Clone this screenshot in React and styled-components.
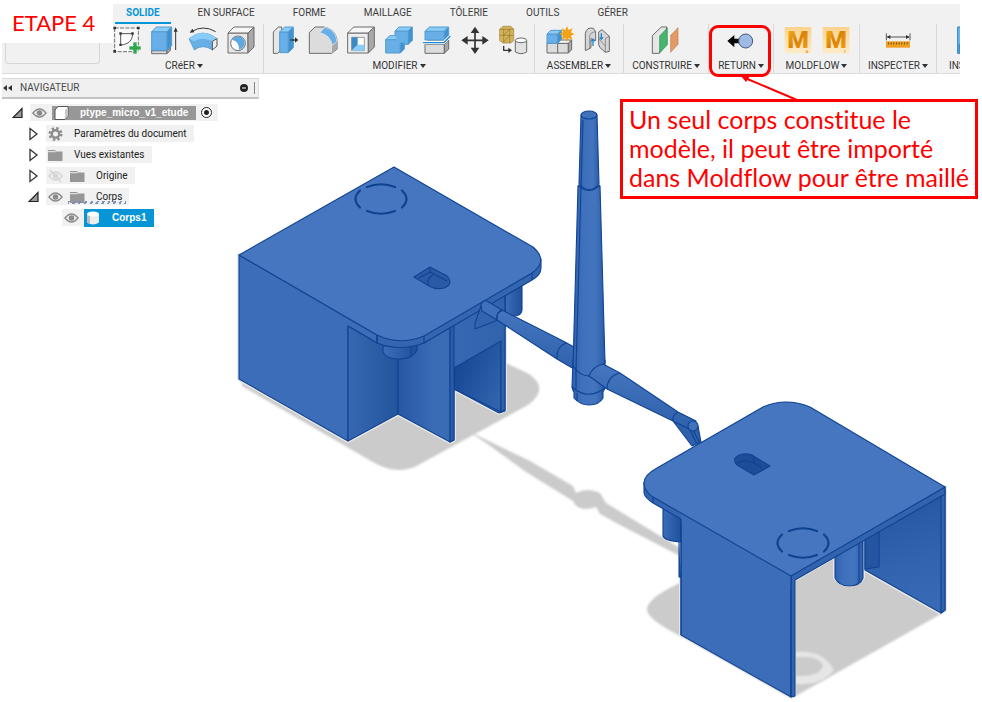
import React from "react";
import styled, { createGlobalStyle, css } from "styled-components";

const uiFont = css`Roboto, "Liberation Sans", sans-serif`;
const noteFont = css`Lato, "Open Sans", sans-serif`;

const GlobalStyle = createGlobalStyle`
  *, *::before, *::after { box-sizing: border-box; }
  body { margin: 0; background: #fff; color: #3c3c3c; font-family: "Liberation Sans", sans-serif; }
  button { border: 0; padding: 0; background: none; color: inherit; font: inherit; }
  svg { display: block; }
`;

const Page = styled.main`
  min-height: 100vh;
  background: #fff;
  overflow-x: hidden;
`;

/* ---------- Header ---------- */
const Header = styled.header`
  display: grid;
  grid-template-columns: 113px minmax(0, 1fr);
  padding-right: 22px;
`;
const StepColumn = styled.div`
  display: flex;
  flex-direction: column;
`;
const StepTitle = styled.h1`
  margin: 0;
  padding: 7px 0 4px 12px;
  color: #f00;
  font: 400 22px/32px ${noteFont};
  white-space: nowrap;
`;
const StepFooter = styled.div`
  flex: 1;
  margin-left: 2px;
  padding: 0 13px 9px 3px;
  background: #f1f1f1;
  border-bottom: 1px solid #dcdcdc;
`;
const WorkspaceButton = styled.button`
  display: block;
  width: 100%;
  height: 100%;
  border: 1px solid #d6d6d6;
  border-top: 0;
  border-radius: 0 0 4px 4px;
`;
const Ribbon = styled.div`
  margin-top: 4px;
  background: #f1f1f1;
  border-bottom: 1px solid #dcdcdc;
`;
const Tabs = styled.nav`
  display: flex;
  gap: 16px;
  padding-left: 2px;
`;
const Tab = styled.button`
  height: 20px;
  padding: 0 11px;
  border-bottom: 2px solid ${(p) => (p.$active ? "#0696d7" : "transparent")};
  color: ${(p) => (p.$active ? "#0696d7" : "#3c3c3c")};
  font: ${(p) => (p.$active ? 700 : 400)} 10px/18px ${uiFont};
  white-space: nowrap;
`;
const Groups = styled.div`
  display: flex;
`;
const Group = styled.section`
  position: relative;
  flex: 0 0 ${(p) => p.$width}px;
  display: flex;
  flex-direction: column;
  align-items: center;
  gap: 4px;
  padding: 2px 0 1px;
  &:first-child {
    padding-right: 8px;
  }
  &:not(:last-child) {
    border-right: 1px solid #d9d9d9;
  }
  &:last-child {
    flex: 1 1 0;
    overflow: hidden;
    align-items: flex-start;
    padding-left: 12px;
  }
`;
const Highlight = styled.span`
  position: absolute;
  z-index: 2;
  inset: 1px 2px -4px 0;
  border: 3px solid #f00;
  border-radius: 9px;
  pointer-events: none;
`;
const Tools = styled.div`
  display: flex;
  gap: 10px;
`;
const Tool = styled.button`
  flex: none;
  width: 28px;
  height: 29px;
  svg { width: 28px; height: 29px; overflow: visible; }
`;
const GroupMenu = styled.button`
  display: flex;
  align-items: center;
  gap: 2px;
  color: #333;
  font: 400 10px/13px ${uiFont};
  white-space: nowrap;
  &::after {
    content: "";
    border: 3px solid transparent;
    border-top: 4px solid #333;
    border-bottom: 0;
  }
`;

/* ---------- Workspace ---------- */
const Workspace = styled.div`
  position: relative;
  display: grid;
  grid-template-columns: minmax(0, 1fr);
`;
const Scene = styled.svg`
  grid-area: 1 / 1;
  width: 100%;
  height: auto;
`;
const Browser = styled.aside`
  grid-area: 1 / 1;
  justify-self: start;
  align-self: start;
  z-index: 1;
  width: 257px;
  margin: 4px 0 0 2px;
`;
const BrowserBar = styled.div`
  display: flex;
  align-items: center;
  height: 21px;
  padding: 0 2px 0 1px;
  background: #f0f0f0;
  border: 1px solid #dadada;
  border-bottom: 2px solid #c4c4c4;
  border-left: 0;
`;
const BrowserTitle = styled.h2`
  flex: 1;
  margin: 0 0 0 8px;
  color: #4a4a4a;
  font: 400 10px/16px ${uiFont};
`;
const Tree = styled.ul`
  display: flex;
  flex-direction: column;
  gap: 4px;
  margin: 5px 0 0;
  padding: 0;
  list-style: none;
`;
const TreeRow = styled.li`
  display: flex;
  align-items: center;
  height: 17px;
  padding-left: ${(p) => p.$indent}px;
`;
const Toggle = styled.button`
  flex: none;
  width: 18px;
  height: 14px;
  svg { width: 12px; height: 14px; }
`;
const RowBody = styled.div`
  display: flex;
  align-items: center;
  gap: ${(p) => (p.$tight ? 5 : 7)}px;
  height: 17px;
  padding: 0 ${(p) => p.$end ?? 7}px 0 2px;
  background: #f1f1f1;
  svg { width: 15px; height: 14px; flex: none; }
`;
const RowLabel = styled.span`
  margin-left: 4px;
  color: #222;
  font: 400 10px/17px ${uiFont};
  white-space: nowrap;
`;
const Selected = styled.div`
  display: flex;
  align-items: center;
  gap: 7px;
  height: ${(p) => (p.$blue ? 18 : 14)}px;
  padding: 0 8px 0 2px;
  background: ${(p) => (p.$blue ? "#0696d7" : "#979797")};
  ${RowLabel} { color: #fff; font-weight: 700; font-family: "Liberation Sans", sans-serif; }
`;
const Marked = styled.div`
  position: relative;
  display: flex;
  align-items: center;
  gap: 7px;
`;
const Hatch = styled.span`
  position: absolute;
  left: -2px;
  right: -4px;
  bottom: 1px;
  height: 3px;
  background: repeating-linear-gradient(120deg, #7d90b8 0 2px, transparent 2px 5px);
`;
const ActiveRadio = styled.input`
  appearance: none;
  flex: none;
  width: 11px;
  height: 11px;
  margin: 0;
  border: 1px solid #222;
  border-radius: 50%;
  background: radial-gradient(circle, #222 0 2px, #fff 3px);
`;

/* ---------- Note ---------- */
const Note = styled.p`
  position: absolute;
  z-index: 2;
  top: 25px;
  right: 4px;
  margin: 0;
  padding: 3px 6px 4px;
  border: 3px solid #f00;
  background: #fff;
  color: #f00;
  font: 400 25px/29px ${noteFont};
  font-variant-ligatures: none;
  white-space: nowrap;
`;

/* ---------- Tool icons ---------- */
const Icon = ({ children }) => (
  <svg viewBox="0 0 84 87" aria-hidden="true" strokeLinejoin="round">{children}</svg>
);
const OUT = "#6b6b6b";
const Cube = ({ x = 0, y = 0, w, h, d, front, top, side, stroke }) => (
  <g stroke={stroke} strokeWidth="3">
    <path fill={front} d={`M${x} ${y + d}h${w}v${h}h${-w}z`} />
    <path fill={top} d={`M${x} ${y + d}l${d} ${-d}h${w}l${-d} ${d}z`} />
    <path fill={side} d={`M${x + w} ${y + d}l${d} ${-d}v${h}l${-d} ${d}z`} />
  </g>
);
const grey = { front: "#dcdcdc", top: "#f7f7f7", side: "#a8a8a8", stroke: OUT };
const blue = { front: "#67afe6", top: "#8accf9", side: "#3f92cf", stroke: "#559bd0" };

const SketchIcon = () => (
  <Icon>
    <rect x="5" y="6" width="71" height="71" fill="#f8f8f8" stroke="#555" strokeWidth="2.5" strokeDasharray="12 4" />
    <path d="M23 23h36c-1 20-12 32-36 34z" fill="#fff" stroke="#555" strokeWidth="3" />
    <path d="M1 2h8v8H1zM72 2h8v8h-8zM1 72h8v8H1zM19 19h7v7h-7zM55 19h7v7h-7zM19 53h7v7h-7z" fill="#333" />
    <path d="M60 48h12v12h12v12H72v12H60V72H48V60h12z" fill="#2fa84f" stroke="#f1f1f1" strokeWidth="2" />
  </Icon>
);
const ExtrudeIcon = () => (
  <Icon>
    <Cube x={2} y={64} w={46} h={9} d={10} {...grey} />
    <Cube x={2} y={3} w={46} h={56} d={14} {...blue} />
    <path d="M74 72V10" stroke="#333" strokeWidth="3" />
    <path d="M74 4l6 13H68z" fill="#333" />
  </Icon>
);
const RevolveIcon = () => (
  <Icon>
    <path d="M8 17q34-22 72 0" fill="none" stroke="#333" strokeWidth="3" />
    <path d="M2 20l8-12 6 11z" fill="#333" />
    <path d="M0 38q42-34 84 0L70 72q-28-20-54 0z" fill="#67afe6" stroke="#4b8fc4" strokeWidth="2" />
    <path d="M0 38q42-34 84 0l-14 8q-28-16-56 0z" fill="#8accf9" />
    <path d="M70 46l14-8v22L70 72z" fill="#eee" stroke="#555" strokeWidth="3" />
  </Icon>
);
const HoleIcon = () => (
  <Icon>
    <Cube x={3} y={3} w={60} h={60} d={18} {...grey} front="#e9e9e9" />
    <circle cx="33" cy="52" r="22" fill="#fff" stroke={OUT} strokeWidth="3" />
    <path d="M30 33a20 20 0 1 0 21 29C40 62 29 50 30 33z" fill="#5fa9e0" transform="rotate(180 33 52)" />
  </Icon>
);
const PressPullIcon = () => (
  <Icon>
    <path d="M7 18L22 3h10v66L20 82H7z" fill="#e6e6e6" stroke={OUT} strokeWidth="3" />
    <Cube x={26} y={3} w={26} h={62} d={15} {...blue} />
    <path d="M58 42h18" stroke="#333" strokeWidth="4" />
    <path d="M72 34l10 8-10 8z" fill="#333" />
  </Icon>
);
const FilletIcon = () => (
  <Icon>
    <path d="M1 20L18 3h26c26 4 40 22 40 44v22L68 82H1z" fill="#dcdcdc" stroke={OUT} strokeWidth="3" />
    <path d="M32 20L48 4q32 6 36 42L69 58Q66 28 32 20z" fill="#67afe6" stroke="#f1f1f1" strokeWidth="2" />
    <path d="M69 60l13-12v22L69 81z" fill="#aaa" />
  </Icon>
);
const ShellIcon = () => (
  <Icon>
    <Cube x={2} y={3} w={62} h={60} d={18} {...grey} front="#efefef" />
    <path d="M14 34h38v40H14z" fill="#fff" stroke={OUT} strokeWidth="2" />
    <path d="M14 34h18v22L14 74z" fill="#3a8ac6" />
    <path d="M14 74l18-18h20v18z" fill="#8accf9" />
  </Icon>
);
const CombineIcon = () => (
  <Icon>
    <Cube x={30} y={3} w={40} h={40} d={12} {...blue} />
    <Cube x={2} y={29} w={44} h={40} d={12} {...blue} />
    <path d="M32 18h36v32H34z" fill="#67afe6" />
  </Icon>
);
const SplitIcon = () => (
  <Icon>
    <Cube x={6} y={42} w={58} h={27} d={13} {...grey} />
    <Cube x={6} y={3} w={58} h={26} d={13} {...blue} />
    <path d="M0 50h62L82 30" fill="none" stroke="#fff" strokeWidth="9" />
    <path d="M0 50h62L82 30" fill="none" stroke="#1f86d2" strokeWidth="4" />
  </Icon>
);
const MoveIcon = () => (
  <Icon>
    <path d="M42 14v58M12 43h60" stroke="#333" strokeWidth="5" />
    <path d="M42 2l13 19H29zM42 84l13-19H29zM1 43l19-13v26zM83 43L64 30v26z" fill="#333" />
  </Icon>
);
const ConvertIcon = () => (
  <Icon>
    <path d="M2 10L12 1h24l8 9v34l-8 7H12l-10-7z" fill="#d3b35c" stroke="#a58437" strokeWidth="2" />
    <path d="M2 10h42M2 28h42M14 10v40M32 10v40M14 28l18-18M14 48l18-20" fill="none" stroke="#967528" strokeWidth="2" />
    <path d="M14 60v13h18" fill="none" stroke="#333" strokeWidth="4" />
    <path d="M28 65l11 8-11 8z" fill="#333" />
    <path d="M49 44v34q17 10 34 0V44z" fill="#e2e2e2" stroke={OUT} strokeWidth="3" />
    <ellipse cx="66" cy="43" rx="17" ry="7" fill="#fff" stroke={OUT} strokeWidth="3" />
  </Icon>
);
const ComponentIcon = () => (
  <Icon>
    <Cube x={3} y={42} w={34} h={29} d={10} {...grey} />
    <Cube x={35} y={42} w={32} h={29} d={10} {...grey} />
    <Cube x={3} y={13} w={32} h={28} d={11} {...blue} />
    <path d="M63 0l5 12 12-5-5 12 11 5-11 5 5 12-12-5-5 12-5-12-12 5 5-12-12-5 12-5-5-12 12 5z" fill="#f5a21b" />
  </Icon>
);
const JointIcon = () => (
  <Icon>
    <path d="M4 74V22Q8 2 28 7l7 10v27l-14-6v27z" fill="#d5d5d5" stroke={OUT} strokeWidth="3" />
    <path d="M17 70V28q3-10 17-11" fill="none" stroke={OUT} strokeWidth="2" />
    <path d="M44 56V18l10-7 22 20v45l-12 3-16-14z" fill="#d5d5d5" stroke={OUT} strokeWidth="3" />
    <path d="M64 79V38l12-7M44 38l20 22" fill="none" stroke={OUT} strokeWidth="2" />
    <path d="M27 60V44m25-22v18" stroke="#1f86d2" strokeWidth="4" />
    <path d="M20 46l7-9 7 9zM45 34h14l-7 9z" fill="#1f86d2" />
  </Icon>
);
const PlaneIcon = () => (
  <Icon>
    <path d="M1 29L28 3h17L22 82H1z" fill="#e6e6e6" stroke={OUT} strokeWidth="3" />
    <path d="M23 30L46 6v50L23 81z" fill="#46b46d" stroke="#2c8f50" strokeWidth="2" />
    <path d="M56 28L78 5v50L56 79z" fill="#e39a69" stroke="#c9814f" strokeWidth="2" />
  </Icon>
);
const ReturnIcon = () => (
  <Icon>
    <path d="M1 45l21-18v11h18v14H22v12z" fill="#050505" />
    <circle cx="56" cy="45" r="21" fill="#9dbbe4" stroke="#46597a" strokeWidth="3" />
  </Icon>
);
const MoldflowIcon = ({ mark }) => (
  <Icon>
    <defs>
      <linearGradient id="mold-m" x2="1" y2="1">
        <stop offset="0" stopColor="#fbb62a" />
        <stop offset="0.5" stopColor="#d98205" />
        <stop offset="1" stopColor="#f5a51c" />
      </linearGradient>
      <linearGradient id="mold-bg" x2="0" y2="1">
        <stop offset="0" stopColor="#fbd38d" />
        <stop offset="1" stopColor="#fdebc9" />
      </linearGradient>
    </defs>
    <path d="M2 3h80v79H2z" fill="url(#mold-bg)" />
    <text x="42" y="65" textAnchor="middle" fontFamily="Roboto, sans-serif" fontWeight="900" fontSize="74" fill="url(#mold-m)">M</text>
    <text x="69" y="80" textAnchor="middle" fontFamily="Roboto, sans-serif" fontWeight="700" fontSize="13" fill="#e8930c">{mark}</text>
  </Icon>
);
const MeasureIcon = () => (
  <Icon>
    <path d="M7 22v21M78 22v21M10 33h65" stroke="#555" strokeWidth="3" />
    <path d="M8 33l11-6v12zM77 33l-11-6v12z" fill="#333" />
    <path d="M6 46h72v19H6z" fill="#f0a020" />
    <path d="M12 52h62" stroke="#7c5410" strokeWidth="7" strokeDasharray="3 5" />
  </Icon>
);
const InsertIcon = () => (
  <Icon>
    <path d="M26 3h56v79H26z" fill="#67b4ee" stroke="#2c83c4" strokeWidth="3" />
    <path d="M28 56l20-20 34 34v10H28z" fill="#3f8fce" />
  </Icon>
);

/* ---------- Tree icons ---------- */
const EyeIcon = ({ off }) => (
  <svg viewBox="0 0 15 14" aria-hidden="true" opacity={off ? 0.25 : 1}>
    <path d="M1 7q6.500-8 13 0-6.500 8-13 0z" fill="none" stroke="#8a8a8a" strokeWidth="1.500" />
    <circle cx="7.500" cy="7" r="2.800" fill="#8a8a8a" />
    {off && <path d="M2 1l11 12" stroke="#8a8a8a" strokeWidth="1.500" />}
  </svg>
);
const FolderIcon = () => (
  <svg viewBox="0 0 15 14" aria-hidden="true">
    <path d="M0 2h7l1 1.500h6.500V13H0z" fill="#979797" />
    <path d="M0 3.700h7.500" stroke="#f1f1f1" />
  </svg>
);
const GearIcon = () => (
  <svg viewBox="0 0 15 14" aria-hidden="true">
    <circle cx="7.500" cy="7" r="5.500" fill="none" stroke="#8d8d8d" strokeWidth="3" strokeDasharray="2.300 2.020" />
    <circle cx="7.500" cy="7" r="3.700" fill="none" stroke="#8d8d8d" strokeWidth="2.400" />
  </svg>
);
const BoxIcon = () => (
  <svg viewBox="0 0 15 14" aria-hidden="true">
    <path d="M1 4l3-3.500h10V10l-3 3.500H1z" fill="#fff" stroke="#555" />
    <path d="M11 13V4l3-3v9z" fill="#c9c9c9" />
  </svg>
);
const BodyIcon = () => (
  <svg viewBox="0 0 15 14" aria-hidden="true">
    <path d="M1 3v8.500q6 4 12 0V3z" fill="#ededed" />
    <path d="M1 3v8.500l3 1.500V4z" fill="#bdbdbd" />
    <ellipse cx="7" cy="3" rx="6" ry="2.500" fill="#fff" />
  </svg>
);
const ClosedIcon = () => (
  <svg viewBox="0 0 12 14" aria-hidden="true">
    <path d="M2 1.500L9 7l-7 5.500z" fill="#fff" stroke="#333" strokeWidth="1.300" />
  </svg>
);
const OpenIcon = () => (
  <svg viewBox="0 0 12 14" aria-hidden="true">
    <path d="M10 2.500v9H1z" fill="#999" stroke="#222" strokeWidth="1.200" />
  </svg>
);

/* ---------- 3D model ---------- */
const EDGE = "#0f4394";

const DashedRing = ({ cx, cy }) => (
  <g transform={`translate(${cx} ${cy})`} fill="none" stroke="#0f4290" strokeWidth="2.200" strokeLinecap="round">
    <path d="M-14-12Q0-17.500 14-12M-14 12Q0 17.500 14 12" />
    <path d="M-21-8.500Q-30 0-21 8.500M21-8.500Q30 0 21 8.500" />
  </g>
);

const Model = () => (
  <Scene viewBox="0 74 982 628" role="img" aria-label="Modèle ptype_micro_v1_etude">
    <defs>
      <linearGradient id="recess-l"><stop offset="0" stopColor="#3667b1" /><stop offset="1" stopColor="#23559f" /></linearGradient>
      <linearGradient id="recess-r"><stop offset="0" stopColor="#2757a3" /><stop offset="0.700" stopColor="#3a6cb6" /></linearGradient>
      <linearGradient id="window" x2="1" y2="0.700"><stop offset="0" stopColor="#0f418e" /><stop offset="1" stopColor="#3162ac" /></linearGradient>
      <linearGradient id="side"><stop offset="0" stopColor="#3a6cb7" /><stop offset="1" stopColor="#2e60aa" /></linearGradient>
      <linearGradient id="tube"><stop offset="0" stopColor="#2f62ad" /><stop offset="0.300" stopColor="#3f70bb" /><stop offset="0.700" stopColor="#4374be" /><stop offset="1" stopColor="#2a5ca8" /></linearGradient>
      <linearGradient id="boss"><stop offset="0" stopColor="#3b6db8" /><stop offset="1" stopColor="#1f509c" /></linearGradient>
      <linearGradient id="inner" x1="0.400" y1="0" x2="0.600" y2="1"><stop offset="0" stopColor="#2455a1" /><stop offset="0.600" stopColor="#3263ae" /><stop offset="1" stopColor="#396ab5" /></linearGradient>
      <linearGradient id="arm" x1="0.600" y1="0" x2="0.400" y2="1"><stop offset="0" stopColor="#4878c1" /><stop offset="1" stopColor="#2c5ea9" /></linearGradient>
      <filter id="soft" x="-5%" y="-5%" width="110%" height="110%"><feGaussianBlur stdDeviation="1" /></filter>
    </defs>

    <g fill="#cbcbcb" filter="url(#soft)">
      <path d="M242 386L371 461Q399 478 422 463L528 405Q550 388 529 374L506 363 400 330 242 380z" />
      <path d="M468 431L530 461 573 486 576 493Q588 487 600 493L606 503 680 548V556L620 525 600 514 596 507Q578 513 573 501L526 472 486 443z" />
      <path d="M684 581Q646 598 647 610 648 620 684 638z" />
      <path d="M792 575L866 540 941 614 794 697z" />
    </g>
    <g filter="url(#soft)">
      <path d="M795 652Q823 649 834 670 822 686 795 684z" fill="#e6e6e6" />
      <path d="M795 657Q820 655 823 666 820 677 795 676z" fill="#cbcbcb" />
    </g>

    <g stroke="#e9e7e3" strokeWidth="4" fill="#e9e7e3" strokeLinejoin="round">
      <path d="M239 255V379L348 441 398 414 450 442 454 440V389L499 413 505 410V300z" />
      <path d="M681 519V635L791 697 794 696V580L835 556V578Q848 592 863 578V569L941 613 945 610V487z" />
    </g>

    <g stroke={EDGE} strokeWidth="1.100" strokeLinejoin="round">
      {/* left part */}
      <path d="M505 290L522 282V310Q521 319 505 314z" fill="url(#boss)" />
      <path d="M420 340L532 276 505 295V411L499 413 454 389V440L450 442z" fill="url(#side)" />
      <path d="M454 368L501 341V412L454 389z" fill="url(#window)" />
      <path d="M501 341V412L505 410V296" fill="#2f61ab" />
      <path d="M239 255L377 335V343L348 326V441L239 379z" fill="#3c6db8" />
      <path d="M348 326L377 343 398 348V414L348 441z" fill="url(#recess-l)" />
      <path d="M398 348L424 343 450 327V442L398 414z" fill="url(#recess-r)" />
      <path d="M450 327L454 325V440L450 442z" fill="#2a5ba6" />
      <path d="M383 346V352Q386 359 398 359 413 359 417 350V344z" fill="url(#boss)" />
      <path d="M411 347V356" />
      <path d="M541 259V268Q541 275 532 280L424 343Q400 352 377 343V333L532 271z" fill="#3465b0" />
      <path d="M394 167L533 247Q549 261 532 273L424 336Q400 346 377 335L239 255z" fill="#4576bf" />
      <path d="M377 335V343M424 336V343M532 273V280" />
      <DashedRing cx={381} cy={199} />
      <path d="M414 277L430 267 447 276Q454 284 444 288 436 290 429 286z" fill="#2a5aa5" />
      <path d="M430 267V272L419 278M430 272L447 281M428 285Q427 278 433 275" fill="none" />

      {/* left runner */}
      <path d="M481 306L475 323V329L498 320 483 309z" fill="#3264ae" />
      <path d="M481 305Q482 300 487 301L502 310 497 320 482 311z" fill="#3f70bb" />
      <path d="M502 310L563 341 574 347V369L557 359 497 320Q496 312 502 310z" fill="url(#arm)" />
      <path d="M566 343Q556 347 557 359M497 320Q496 312 502 311" fill="none" />

      {/* sprue */}
      <path d="M573 360L572 387Q573 391 574 392V398Q580 405 589 405 599 405 603 398V392L605 388V360z" fill="url(#tube)" />
      <path d="M572 387Q588 401 605 388M577 393V401" fill="none" />
      <path d="M578 186L573 366Q580 376 589 376 600 376 605 363L600 186z" fill="url(#tube)" />
      <path d="M581 115L579 184Q589 195 599 184L597 115z" fill="url(#tube)" />
      <path d="M578 185Q589 196 600 185M583 120L581 187 576 371V389" fill="none" />
      <ellipse cx="589" cy="115" rx="8" ry="4" fill="#4172bc" />

      {/* right runner */}
      <path d="M673 421L692 446 701 442 698 426z" fill="#2f60aa" />
      <path d="M690 430L697 444M693 430L700 443" fill="none" />
      <path d="M589 376Q593 366 603 364L620 373 678 412 696 421 691 430 673 421 607 389z" fill="url(#arm)" />
      <path d="M619 373Q607 377 607 389M678 412Q672 415 673 421" fill="none" />
      <circle cx="693" cy="426" r="5" fill="#4172bc" />

      {/* right part */}
      <path d="M663 506V536Q665 541 681 542V510z" fill="url(#boss)" />
      <path d="M679 542V577H681" fill="#1f509c" />
      <path d="M865 535L945 490V610L941 613 865 570z" fill="url(#inner)" />
      <path d="M865 535L879 528V567L865 569z" fill="#2455a1" />
      <path d="M835 550V578Q839 586 849 586 860 586 863 578V530z" fill="url(#tube)" />
      <path d="M859 535V583" />
      <path d="M941 496V613L945 610V487z" fill="#3162ac" />
      <path d="M681 510L791 575V697L681 635z" fill="#3c6db8" />
      <path d="M791 575L945 487V494L795 580V696L791 697z" fill="#3263ae" />
      <path d="M644 482V493Q645 498 653 503L681 519 791 580 653 494z" fill="#3465b0" stroke="none" />
      <path d="M644 482V493Q645 498 653 503L681 519V635" fill="none" />
      <path d="M681 512L791 575V590L681 525z" fill="#3c6db8" stroke="none" />
      <path d="M945 487L810 407Q786 397 763 407L657 468Q644 475 644 483 644 491 653 497L791 576z" fill="#4576bf" />
      <path d="M653 497V503M681 519V530M791 576V697" />
      <DashedRing cx={803} cy={543} />
      <path d="M737 465Q730 457 743 454 750 453 755 457L770 466 754 475z" fill="#1d4d99" />
      <path d="M737 463Q748 457 762 468M754 457V463" fill="none" />
    </g>

    <path d="M797 100L745 78" stroke="#f00" strokeWidth="2" />
    <path d="M740 75L750 76 746 82z" fill="#f00" />
  </Scene>
);

/* ---------- Data ---------- */
const tabs = ["SOLIDE", "EN SURFACE", "FORME", "MAILLAGE", "TÔLERIE", "OUTILS", "GÉRER"];
const MoldA = () => <MoldflowIcon mark="A" />;
const MoldI = () => <MoldflowIcon mark="I" />;
const groups = [
  { name: "CRéER", width: 151, tools: [["Esquisse", SketchIcon], ["Extrusion", ExtrudeIcon], ["Révolution", RevolveIcon], ["Perçage", HoleIcon]] },
  { name: "MODIFIER", width: 271, tools: [["Appuyer/Tirer", PressPullIcon], ["Congé", FilletIcon], ["Coque", ShellIcon], ["Combiner", CombineIcon], ["Scinder", SplitIcon], ["Déplacer", MoveIcon], ["Convertir", ConvertIcon]] },
  { name: "ASSEMBLER", width: 89, tools: [["Composant", ComponentIcon], ["Liaison", JointIcon]] },
  { name: "CONSTRUIRE", width: 85, tools: [["Plan", PlaneIcon]] },
  { name: "RETURN", width: 65, tools: [["Retour", ReturnIcon]], marked: true },
  { name: "MOLDFLOW", width: 86, tools: [["Moldflow A", MoldA], ["Moldflow I", MoldI]] },
  { name: "INSPECTER", width: 77, tools: [["Mesurer", MeasureIcon]] },
  { name: "INSÉRER", width: 90, tools: [["Insérer", InsertIcon]] },
];

export default function App() {
  return (
    <>
      <GlobalStyle />
      <Page>
        <Header>
          <StepColumn>
            <StepTitle>ETAPE 4</StepTitle>
            <StepFooter><WorkspaceButton aria-label="Espace de travail" /></StepFooter>
          </StepColumn>
          <Ribbon>
            <Tabs>
              {tabs.map((t, i) => <Tab key={t} $active={i === 0}>{t}</Tab>)}
            </Tabs>
            <Groups>
              {groups.map((g) => (
                <Group key={g.name} $width={g.width}>
                  <Tools>
                    {g.tools.map(([label, Glyph]) => (
                      <Tool key={label} aria-label={label}><Glyph /></Tool>
                    ))}
                  </Tools>
                  <GroupMenu>{g.name}</GroupMenu>
                  {g.marked && <Highlight />}
                </Group>
              ))}
            </Groups>
          </Ribbon>
        </Header>

        <Workspace>
          <Model />
          <Browser>
            <BrowserBar>
              <svg width="9" height="8" viewBox="0 0 9 8" aria-hidden="true"><path d="M4 1v6L0 4zM9 1v6L5 4z" fill="#333" /></svg>
              <BrowserTitle>NAVIGATEUR</BrowserTitle>
              <svg width="17" height="12" viewBox="0 0 17 12" aria-hidden="true">
                <circle cx="5" cy="6" r="4" fill="#222" /><path d="M3 6h4" stroke="#fff" />
                <path d="M15.500 0v12" stroke="#888" />
              </svg>
            </BrowserBar>
            <Tree>
              <TreeRow $indent={10}>
                <Toggle aria-label="Réduire"><OpenIcon /></Toggle>
                <RowBody $tight $end={6}>
                  <EyeIcon />
                  <Selected><BoxIcon /><RowLabel>ptype_micro_v1_etude</RowLabel></Selected>
                  <ActiveRadio type="radio" name="active" defaultChecked aria-label="Activer le composant" />
                </RowBody>
              </TreeRow>
              <TreeRow $indent={26}>
                <Toggle aria-label="Développer"><ClosedIcon /></Toggle>
                <RowBody><GearIcon /><RowLabel>Paramètres du document</RowLabel></RowBody>
              </TreeRow>
              <TreeRow $indent={26}>
                <Toggle aria-label="Développer"><ClosedIcon /></Toggle>
                <RowBody><FolderIcon /><RowLabel>Vues existantes</RowLabel></RowBody>
              </TreeRow>
              <TreeRow $indent={26}>
                <Toggle aria-label="Développer"><ClosedIcon /></Toggle>
                <RowBody><EyeIcon off /><FolderIcon /><RowLabel>Origine</RowLabel></RowBody>
              </TreeRow>
              <TreeRow $indent={26}>
                <Toggle aria-label="Réduire"><OpenIcon /></Toggle>
                <RowBody>
                  <EyeIcon />
                  <Marked><FolderIcon /><RowLabel>Corps</RowLabel><Hatch /></Marked>
                </RowBody>
              </TreeRow>
              <TreeRow $indent={60}>
                <RowBody $tight $end={0}>
                  <EyeIcon />
                  <Selected $blue><BodyIcon /><RowLabel>Corps1</RowLabel></Selected>
                </RowBody>
              </TreeRow>
            </Tree>
          </Browser>
          <Note>
            Un seul corps constitue le<br />modèle, il peut être importé<br />dans Moldflow pour être maillé
          </Note>
        </Workspace>
      </Page>
    </>
  );
}
